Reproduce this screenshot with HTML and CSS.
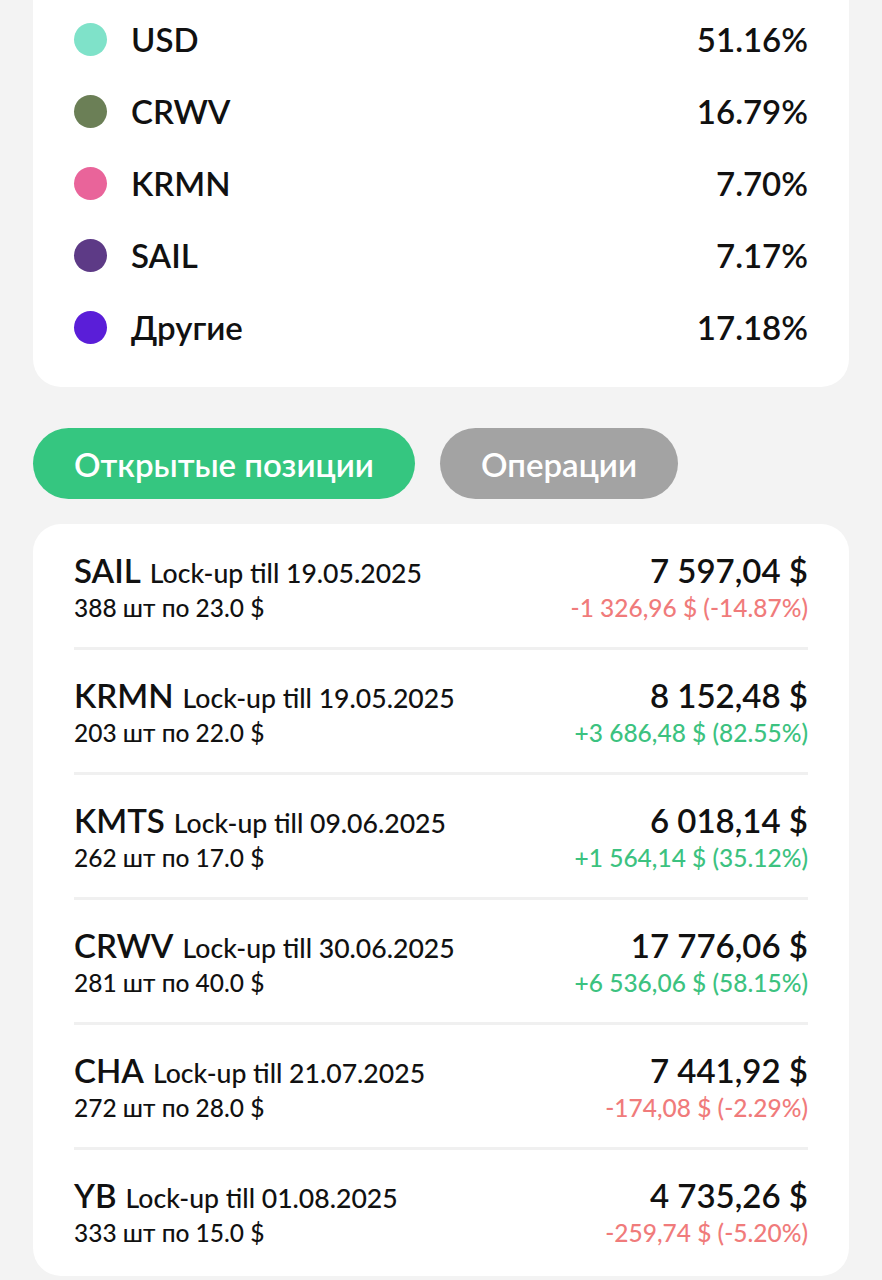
FILE: index.html
```html
<!DOCTYPE html>
<html lang="ru">
<head>
    <meta charset="UTF-8">
    <meta name="viewport" content="width=device-width, initial-scale=1.0">
    <title>Портфель</title>
    <link rel="stylesheet" href="styles.css">
</head>
<body>

<!-- Структура портфеля -->
<div class="card legend">
    <div class="legend-row">
        <span class="dot dot-usd"></span>
        <span class="legend-name">USD</span>
        <span class="legend-value">51.16%</span>
    </div>
    <div class="legend-row">
        <span class="dot dot-crwv"></span>
        <span class="legend-name">CRWV</span>
        <span class="legend-value">16.79%</span>
    </div>
    <div class="legend-row">
        <span class="dot dot-krmn"></span>
        <span class="legend-name">KRMN</span>
        <span class="legend-value">7.70%</span>
    </div>
    <div class="legend-row">
        <span class="dot dot-sail"></span>
        <span class="legend-name">SAIL</span>
        <span class="legend-value">7.17%</span>
    </div>
    <div class="legend-row">
        <span class="dot dot-other"></span>
        <span class="legend-name">Другие</span>
        <span class="legend-value">17.18%</span>
    </div>
</div>

<div class="tabs">
    <button class="tab active">Открытые позиции</button>
    <button class="tab">Операции</button>
</div>

<!-- Открытые позиции -->
<div class="card positions">
    <div class="position">
        <div class="pos-left">
            <div class="pos-title"><span class="ticker">SAIL</span><span class="lock">Lock-up till 19.05.2025</span></div>
            <div class="pos-sub">388 шт по 23.0 $</div>
        </div>
        <div class="pos-right">
            <div class="amount">7 597,04 $</div>
            <div class="change minus">-1 326,96 $ (-14.87%)</div>
        </div>
    </div>
    <div class="position">
        <div class="pos-left">
            <div class="pos-title"><span class="ticker">KRMN</span><span class="lock">Lock-up till 19.05.2025</span></div>
            <div class="pos-sub">203 шт по 22.0 $</div>
        </div>
        <div class="pos-right">
            <div class="amount">8 152,48 $</div>
            <div class="change plus">+3 686,48 $ (82.55%)</div>
        </div>
    </div>
    <div class="position">
        <div class="pos-left">
            <div class="pos-title"><span class="ticker">KMTS</span><span class="lock">Lock-up till 09.06.2025</span></div>
            <div class="pos-sub">262 шт по 17.0 $</div>
        </div>
        <div class="pos-right">
            <div class="amount">6 018,14 $</div>
            <div class="change plus">+1 564,14 $ (35.12%)</div>
        </div>
    </div>
    <div class="position">
        <div class="pos-left">
            <div class="pos-title"><span class="ticker">CRWV</span><span class="lock">Lock-up till 30.06.2025</span></div>
            <div class="pos-sub">281 шт по 40.0 $</div>
        </div>
        <div class="pos-right">
            <div class="amount">17 776,06 $</div>
            <div class="change plus">+6 536,06 $ (58.15%)</div>
        </div>
    </div>
    <div class="position">
        <div class="pos-left">
            <div class="pos-title"><span class="ticker">CHA</span><span class="lock">Lock-up till 21.07.2025</span></div>
            <div class="pos-sub">272 шт по 28.0 $</div>
        </div>
        <div class="pos-right">
            <div class="amount">7 441,92 $</div>
            <div class="change minus">-174,08 $ (-2.29%)</div>
        </div>
    </div>
    <div class="position">
        <div class="pos-left">
            <div class="pos-title"><span class="ticker">YB</span><span class="lock">Lock-up till 01.08.2025</span></div>
            <div class="pos-sub">333 шт по 15.0 $</div>
        </div>
        <div class="pos-right">
            <div class="amount">4 735,26 $</div>
            <div class="change minus">-259,74 $ (-5.20%)</div>
        </div>
    </div>
</div>

</body>
</html>
```

FILE: styles.css
```css
body {
    font-family: Lato, "Noto Sans", sans-serif;
    margin: 0;
    padding: 0 33px;
    background-color: #f3f3f3;
    color: #111;
}
.card {
    background-color: white;
    border-radius: 28px;
    padding: 0 41px 0 41px;
}
.legend {
    border-radius: 0 0 28px 28px;
    padding-top: 3px;
    padding-bottom: 24px;
}
.legend-row {
    display: flex;
    align-items: center;
    height: 72px;
}
.dot {
    width: 33px;
    height: 33px;
    border-radius: 50%;
    margin-right: 24px;
    flex-shrink: 0;
}
.dot-usd { background-color: #7fe2c9; }
.dot-crwv { background-color: #6b7f56; }
.dot-krmn { background-color: #e9649a; }
.dot-sail { background-color: #5d3a86; }
.dot-other { background-color: #5a1ed8; }
.legend-name {
    font-size: 33px;
    font-weight: 600;
    flex: 1;
}
.legend-value {
    font-size: 33px;
    font-weight: 600;
}
.tabs {
    display: flex;
    gap: 25px;
    margin: 41px 0 25px;
}
.tab {
    font-family: inherit;
    height: 71px;
    border: none;
    border-radius: 36px;
    padding: 0 41px;
    font-size: 33px;
    font-weight: 600;
    color: white;
    background-color: #a3a3a3;
    cursor: pointer;
}
.tab.active {
    background-color: #35c680;
}
.positions {
    padding-top: 1px;
    padding-bottom: 4px;
}
.position {
    display: flex;
    justify-content: space-between;
    padding: 25px 0 21px;
    border-bottom: 3px solid #f0f0f0;
}
.position:last-child {
    border-bottom: none;
}
.pos-title {
    display: flex;
    align-items: baseline;
    gap: 9px;
    height: 40px;
    line-height: 40px;
    white-space: nowrap;
}
.ticker {
    font-size: 33px;
    font-weight: 600;
}
.lock {
    font-size: 26.6px;
    font-weight: 500;
}
.pos-sub {
    font-size: 24.5px;
    font-weight: 500;
    line-height: 36px;
}
.pos-right {
    text-align: right;
}
.amount {
    font-size: 33px;
    font-weight: 600;
    line-height: 40px;
}
.change {
    font-size: 24.5px;
    font-weight: 500;
    line-height: 36px;
}
.change.minus {
    color: #f07b7b;
}
.change.plus {
    color: #3cc280;
}
```
